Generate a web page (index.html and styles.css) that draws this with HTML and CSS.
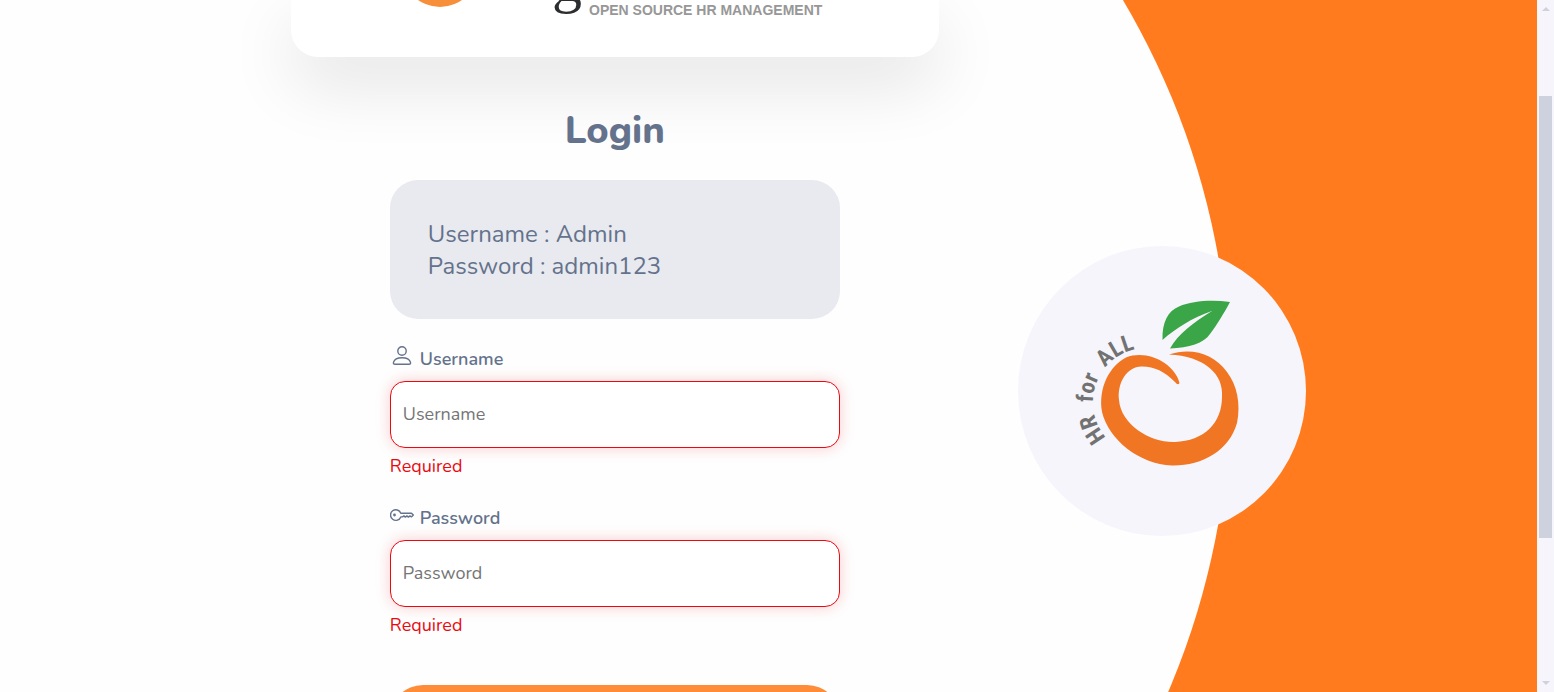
FILE: index.html
```html
<!DOCTYPE html>
<html lang="en">
<head>
<meta charset="utf-8">
<title>OrangeHRM</title>
<link rel="stylesheet" href="styles.css">
</head>
<body>
<div class="screen">
  <main class="page">
    <section class="pane">
      <div class="brand-card">
        <svg class="brand-logo" viewBox="0 0 648 57" role="img" aria-label="OrangeHRM">
          <circle cx="149" cy="-31" r="38" fill="#f68e3a"/>
          <text class="brand-name" x="261" y="1">g</text>
          <text class="brand-tagline" x="298" y="15">OPEN SOURCE HR MANAGEMENT</text>
        </svg>
      </div>
      <form class="login">
        <h1 class="title">Login</h1>
        <div class="hint">
          <p class="hint-line">Username : Admin</p>
          <p class="hint-line">Password : admin123</p>
        </div>
        <div class="field">
          <label class="label" for="username">
            <svg class="icon" viewBox="0 0 24 24" aria-hidden="true">
              <circle cx="12" cy="7" r="4.2"/>
              <path d="M5 20.300h14c1.300 0 1.800-.7 1.500-1.900-.8-3-4.100-4.600-8.500-4.600s-7.700 1.600-8.500 4.600c-.3 1.200.2 1.900 1.500 1.900z"/>
            </svg>
            <span class="label-text">Username</span>
          </label>
          <input class="input" id="username" type="text" placeholder="Username">
          <span class="error">Required</span>
        </div>
        <div class="field">
          <label class="label" for="password">
            <svg class="icon" viewBox="0 -1 24 24" aria-hidden="true">
              <path d="M10.800 9.200h10.700l1.800 1.900-1.900 1.800-1.500-1-1.500 1.200-1.500-1.200-1.500 1.200-1.500-1.200-1.300 1h-1.800a5.300 5.300 0 1 1 0-3.700z"/>
              <circle class="dot" cx="4.500" cy="11" r="1.400"/>
            </svg>
            <span class="label-text">Password</span>
          </label>
          <input class="input" id="password" type="password" placeholder="Password">
          <span class="error">Required</span>
        </div>
        <button class="submit" type="submit" aria-label="Login"></button>
      </form>
    </section>
    <div class="badge">
      <svg class="badge-logo" viewBox="0 0 288 290" role="img" aria-label="HR for ALL">
        <path fill="#3aa648" d="M144.500 94C144 76 150 65 161 60.500C174 55 193 53.500 212 56C206 67 199 79 192 88C186 97 171 102 152 102.500C160 88 176 76 194 65C174 72 158 82 144.500 94z"/>
        <path fill="#f07623" d="M151 108.500C174 101 196 108 209 126C219 139 223 158 219 177C211 205 184 220 154 219.500C121 218 91 194 84 166C80 141 92 120 108 111.500C130 103 157 118 161.500 137Q160 140 157 136C146 125 137 121 124 120.500C109 120 99 137 101 154C103 179 133 197 157 196C186 195 204 177 204 151C206 128 186 110 151 108.500z"/>
        <path id="arc" fill="none" d="M94.200 197.400A54 54 0 0 1 129 102"/>
        <text class="arc-label"><textPath href="#arc" startOffset="22">HR</textPath></text>
        <text class="arc-label"><textPath href="#arc" startOffset="60">for</textPath></text>
        <text class="arc-label"><textPath href="#arc" startOffset="102">ALL</textPath></text>
      </svg>
    </div>
  </main>
  <div class="scrollbar" aria-hidden="true">
    <span class="arrow arrow-up"></span>
    <span class="track"><span class="thumb"></span></span>
    <span class="arrow arrow-down"></span>
  </div>
</div>
</body>
</html>
```
FILE: styles.css
```css
* { box-sizing: border-box; }

body {
  margin: 0;
  overflow: hidden;
  font-family: Nunito, Lato, sans-serif;
  color: #64728c;
}

.screen { display: flex; height: 100vh; }

.page {
  position: relative;
  flex: 1;
  overflow: hidden;
  background: #ff7b1d;
}

.pane {
  position: relative;
  display: flex;
  flex-direction: column;
  align-items: center;
  width: 80%;
}

.pane::before {
  content: "";
  position: absolute;
  top: -375px;
  right: 0;
  width: 1531px;
  height: 1531px;
  border-radius: 50%;
  background: #fefefe;
}

.brand-card {
  position: relative;
  width: 648px;
  max-width: 100%;
  border-radius: 0 0 27px 27px;
  background: #fff;
  box-shadow: 0 27px 68px rgba(0, 0, 0, 0.11);
}

.brand-logo { display: block; width: 100%; }
.brand-name { font: 60px "Liberation Serif", serif; fill: #2b2d2e; }
.brand-tagline { font: bold 14px "Liberation Sans", sans-serif; fill: #979797; }

.login {
  position: relative;
  display: flex;
  flex-direction: column;
  width: 450px;
  max-width: 100%;
}

.title {
  margin: 48px 0 24px;
  font-size: 38px;
  line-height: 51px;
  font-weight: 800;
  text-align: center;
}

.hint {
  margin-bottom: 24px;
  padding: 38px 38px 37px;
  border-radius: 28px;
  background: #e8eaef;
}

.hint-line { margin: 0; font-size: 24px; line-height: 32px; }

.field {
  display: flex;
  flex-direction: column;
  margin-bottom: 24px;
}

.label { display: flex; gap: 6px; height: 38px; }
.label-text { font-size: 18px; line-height: 32px; font-weight: 600; }

.icon {
  width: 24px;
  height: 24px;
  margin-top: 1px;
  fill: none;
  stroke: #64728c;
  stroke-width: 1.4;
  stroke-linejoin: round;
}

.dot { fill: #64728c; stroke: none; }

.input {
  width: 100%;
  height: 67px;
  padding: 0 12px 2px;
  border: 1px solid #eb0910;
  border-radius: 15px;
  outline: none;
  background: #fff;
  box-shadow: 0 0 15px rgba(235, 9, 16, 0.2);
  color: #64728c;
  font: inherit;
  font-size: 18px;
}

.input::placeholder { color: #757575; opacity: 1; }

.error {
  margin-top: 6px;
  font-size: 18px;
  line-height: 24px;
  color: #eb0910;
}

.submit {
  height: 75px;
  margin-top: 24px;
  border: 0;
  border-radius: 33px;
  background: #ff8c38;
}

.badge {
  position: absolute;
  top: 246px;
  left: 66.25%;
  width: 288px;
  height: 290px;
  border-radius: 50%;
  background: #f6f5fb;
}

.badge-logo { display: block; width: 100%; }

.arc-label {
  font: bold 23px "Liberation Sans Narrow", "Roboto Condensed", "Open Sans Condensed", "Liberation Sans", sans-serif;
  fill: #727272;
  text-anchor: middle;
}

.scrollbar {
  display: flex;
  flex-direction: column;
  align-items: center;
  justify-content: space-between;
  width: 17px;
  padding: 7px 2px;
  background: #f6f5fb;
}

.track { flex: 1; width: 100%; padding-top: 85px; }
.thumb { display: block; height: 442px; background: #cdd2de; }
.arrow { border: 4px solid transparent; }
.arrow-up { border-top: 0; border-bottom-color: #cdd2de; }
.arrow-down { border-bottom: 0; border-top-color: #cdd2de; }
```
